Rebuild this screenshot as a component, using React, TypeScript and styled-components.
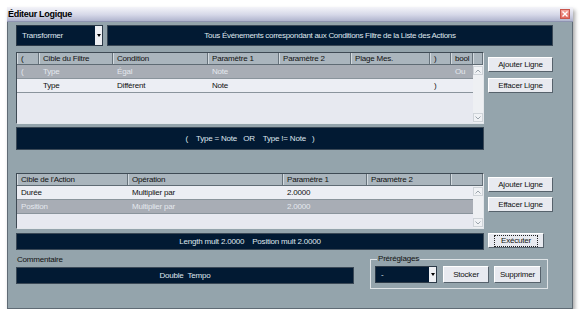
import React from "react";
import styled, { createGlobalStyle } from "styled-components";

const Global = createGlobalStyle`
  html, body { margin: 0; padding: 0; background: #ffffff; }
  body {
    font-family: "Liberation Sans", Arial, sans-serif;
    font-size: 8px;
    letter-spacing: -0.2px;
    color: #111;
  }
  * { box-sizing: border-box; }
`;

const Win = styled.div`
  margin: 7px 0 0 7px;
  width: 566px;
  height: 302px;
  background: #94a4ac;
  border: 1px solid #5f6b75;
  border-top: none;
  box-shadow: 2px 3px 4px rgba(0, 0, 0, 0.35);
  display: flex;
  flex-direction: column;
`;

const TitleBar = styled.div`
  height: 15px;
  margin: 0 -1px;
  background: linear-gradient(to bottom, #f4f4f9 0%, #d6d8e8 55%, #b0b4ce 100%);
  border-bottom: 1px solid #8e94b0;
  display: flex;
  align-items: center;
  justify-content: space-between;
  padding: 0 3px 0 1px;
`;

const Title = styled.span`
  font-weight: bold;
  font-size: 9px;
  letter-spacing: -0.3px;
  color: #000;
`;

const CloseBtn = styled.div`
  width: 10px;
  height: 10px;
  background: linear-gradient(#f4a39b, #e2685e);
  border: 1px solid #c8554c;
  display: flex;
  align-items: center;
  justify-content: center;
`;

const Body = styled.div`
  padding: 3px 0 0 8px;
  display: flex;
  flex-direction: column;
`;

const TopRow = styled.div`
  display: flex;
  gap: 4px;
  height: 21px;
`;

const Select = styled.div<{ $w: number; $h: number }>`
  width: ${(p) => p.$w}px;
  height: ${(p) => p.$h}px;
  background: #021a33;
  border: 1px solid #2c3a48;
  display: flex;
  color: #dfe6ee;
`;

const SelectText = styled.div`
  flex: 1;
  display: flex;
  align-items: center;
  padding-left: 5px;
`;

const SelectArrow = styled.div`
  width: 7px;
  background: #eef0f4;
  display: flex;
  align-items: center;
  justify-content: center;
  &::after {
    content: "";
    border-left: 2.5px solid transparent;
    border-right: 2.5px solid transparent;
    border-top: 3px solid #000;
  }
`;

const DarkBar = styled.div<{ $w: number; $h: number; $tight?: boolean }>`
  width: ${(p) => p.$w}px;
  height: ${(p) => p.$h}px;
  background: #021a33;
  border: 1px solid #3a4856;
  color: #dfe6ee;
  display: flex;
  align-items: center;
  justify-content: center;
  white-space: pre;
  letter-spacing: ${(p) => (p.$tight ? "-0.3px" : "-0.2px")};
`;

const Section = styled.div<{ $mt: number }>`
  display: flex;
  gap: 4px;
  margin-top: ${(p) => p.$mt}px;
`;

const ButtonCol = styled.div<{ $pt: number; $gap: number }>`
  display: flex;
  flex-direction: column;
  gap: ${(p) => p.$gap}px;
  padding-top: ${(p) => p.$pt}px;
`;

const Button = styled.button<{ $w: number; $h?: number }>`
  width: ${(p) => p.$w}px;
  height: ${(p) => p.$h ?? 15}px;
  padding: 0;
  margin: 0;
  background: #e8eaf0;
  border: 1px solid;
  border-color: #ffffff #56626c #56626c #ffffff;
  font-family: inherit;
  font-size: 8px;
  letter-spacing: -0.2px;
  color: #111;
  display: flex;
  align-items: center;
  justify-content: center;
`;

const Focus = styled.span`
  border: 1px dotted #222;
  padding: 1px 6px;
  line-height: 8px;
`;

const Table = styled.div<{ $h: number }>`
  width: 468px;
  height: ${(p) => p.$h}px;
  border: 1px solid;
  border-color: #3e4a54 #e4e8ec #e4e8ec #3e4a54;
  background: #e7e9f0;
  display: flex;
  flex-direction: column;
`;

const Header = styled.div<{ $cols: string }>`
  display: grid;
  grid-template-columns: ${(p) => p.$cols};
  height: 12px;
  background: #aab5bd;
  border-bottom: 1px solid #5f6b74;
`;

const HeadCell = styled.div`
  border-right: 1px solid #66727b;
  box-shadow: inset 1px 0 0 #d3dadf;
  padding-left: 4px;
  line-height: 11px;
  white-space: nowrap;
  overflow: hidden;
  color: #111;
`;

const TableBody = styled.div`
  flex: 1;
  display: flex;
  min-height: 0;
`;

const Rows = styled.div`
  flex: 1;
  display: flex;
  flex-direction: column;
`;

const Row = styled.div<{ $cols: string; $sel?: boolean }>`
  display: grid;
  grid-template-columns: ${(p) => p.$cols};
  height: 14px;
  border-bottom: 1px solid #8a949c;
  background: ${(p) => (p.$sel ? "#a8adb5" : "#eceef4")};
  color: ${(p) => (p.$sel ? "#e4e8ee" : "#111")};
  line-height: 13px;
`;

const Cell = styled.div`
  padding-left: 4px;
  white-space: nowrap;
  overflow: hidden;
`;

const Scrollbar = styled.div`
  width: 10px;
  display: flex;
  flex-direction: column;
  justify-content: space-between;
  background-color: #eef0f3;
  background-image: radial-gradient(#c4c9ce 0.6px, transparent 0.7px);
  background-size: 2px 2px;
  padding: 1px 0;
`;

const ScrollBtn = styled.div<{ $down?: boolean }>`
  height: 9px;
  background: #f0f2f5;
  border: 1px solid #cfd4d9;
  display: flex;
  align-items: center;
  justify-content: center;
  svg { transform: ${(p) => (p.$down ? "rotate(180deg)" : "none")}; }
`;

const BottomRow = styled.div`
  display: flex;
  margin-top: 4px;
`;

const CommentCol = styled.div`
  display: flex;
  flex-direction: column;
  width: 338px;
`;

const Label = styled.div`
  height: 13px;
  line-height: 11px;
  padding-left: 1px;
`;

const Group = styled.fieldset`
  margin: 0 0 0 16px;
  width: 178px;
  height: 35px;
  padding: 2px 4px 0 4px;
  border: 1px solid #dfe4e7;
  display: flex;
  gap: 6px;
  align-items: flex-start;
`;

const Legend = styled.legend`
  font-size: 8px;
  padding: 0 1px;
  margin-left: 2px;
  line-height: 10px;
`;

const GroupButtons = styled.div`
  display: flex;
  gap: 5px;
`;

const Chevron = () => (
  <svg width="6" height="4" viewBox="0 0 6 4">
    <path d="M0.5 3.5 L3 1 L5.5 3.5" stroke="#9ba4ac" strokeWidth="1" fill="none" />
  </svg>
);

const Scroll = () => (
  <Scrollbar>
    <ScrollBtn>
      <Chevron />
    </ScrollBtn>
    <ScrollBtn $down>
      <Chevron />
    </ScrollBtn>
  </Scrollbar>
);

const filterHeadCols = "22px 74px 95px 71px 72px 79px 21px 22px 10px";
const filterRowCols = "22px 74px 95px 71px 72px 79px 21px 22px";
const filterHeads = ["(", "Cible du Filtre", "Condition", "Paramètre 1", "Paramètre 2", "Plage Mes.", ")", "bool", ""];
const filterRows = [
  { sel: true, cells: ["(", "Type", "Égal", "Note", "", "", "", "Ou"] },
  { sel: false, cells: ["", "Type", "Différent", "Note", "", "", ")", ""] },
];

const actionHeadCols = "111px 155px 84px 84px 32px";
const actionRowCols = "111px 155px 84px 84px 22px";
const actionHeads = ["Cible de l'Action", "Opération", "Paramètre 1", "Paramètre 2", ""];
const actionRows = [
  { sel: false, cells: ["Durée", "Multiplier par", "2.0000", "", ""] },
  { sel: true, cells: ["Position", "Multiplier par", "2.0000", "", ""] },
];

type RowData = { sel: boolean; cells: string[] };

const DataTable = ({
  h,
  headCols,
  rowCols,
  heads,
  rows,
}: {
  h: number;
  headCols: string;
  rowCols: string;
  heads: string[];
  rows: RowData[];
}) => (
  <Table $h={h}>
    <Header $cols={headCols}>
      {heads.map((t, i) => (
        <HeadCell key={i}>{t}</HeadCell>
      ))}
    </Header>
    <TableBody>
      <Rows>
        {rows.map((r, i) => (
          <Row key={i} $cols={rowCols} $sel={r.sel}>
            {r.cells.map((c, j) => (
              <Cell key={j}>{c}</Cell>
            ))}
          </Row>
        ))}
      </Rows>
      <Scroll />
    </TableBody>
  </Table>
);

export default function App() {
  return (
    <>
      <Global />
      <Win>
        <TitleBar>
          <Title>Éditeur Logique</Title>
          <CloseBtn>
            <svg width="6" height="6" viewBox="0 0 6 6">
              <path d="M0.5 0.5 L5.5 5.5 M5.5 0.5 L0.5 5.5" stroke="#fff" strokeWidth="1.4" />
            </svg>
          </CloseBtn>
        </TitleBar>
        <Body>
          <TopRow>
            <Select $w={87} $h={21}>
              <SelectText>Transformer</SelectText>
              <SelectArrow />
            </Select>
            <DarkBar $w={446} $h={21} $tight>
              Tous Événements correspondant aux Conditions Filtre de la Liste des Actions
            </DarkBar>
          </TopRow>

          <Section $mt={6}>
            <DataTable h={72} headCols={filterHeadCols} rowCols={filterRowCols} heads={filterHeads} rows={filterRows} />
            <ButtonCol $pt={5} $gap={6}>
              <Button $w={65}>Ajouter Ligne</Button>
              <Button $w={65}>Effacer Ligne</Button>
            </ButtonCol>
          </Section>

          <Section $mt={3}>
            <DarkBar $w={468} $h={23}>{"(    Type = Note   OR    Type != Note   )"}</DarkBar>
          </Section>

          <Section $mt={23}>
            <DataTable h={56} headCols={actionHeadCols} rowCols={actionRowCols} heads={actionHeads} rows={actionRows} />
            <ButtonCol $pt={4} $gap={5}>
              <Button $w={65}>Ajouter Ligne</Button>
              <Button $w={65}>Effacer Ligne</Button>
            </ButtonCol>
          </Section>

          <Section $mt={4}>
            <DarkBar $w={468} $h={17}>{"Length mult 2.0000    Position mult 2.0000"}</DarkBar>
            <Button $w={56} $h={15}>
              <Focus>Exécuter</Focus>
            </Button>
          </Section>

          <BottomRow>
            <CommentCol>
              <Label>Commentaire</Label>
              <DarkBar $w={338} $h={17}>{"Double  Tempo"}</DarkBar>
            </CommentCol>
            <Group>
              <Legend>Préréglages</Legend>
              <Select $w={62} $h={17}>
                <SelectText>-</SelectText>
                <SelectArrow />
              </Select>
              <GroupButtons>
                <Button $w={46} $h={17}>Stocker</Button>
                <Button $w={47} $h={17}>Supprimer</Button>
              </GroupButtons>
            </Group>
          </BottomRow>
        </Body>
      </Win>
    </>
  );
}
